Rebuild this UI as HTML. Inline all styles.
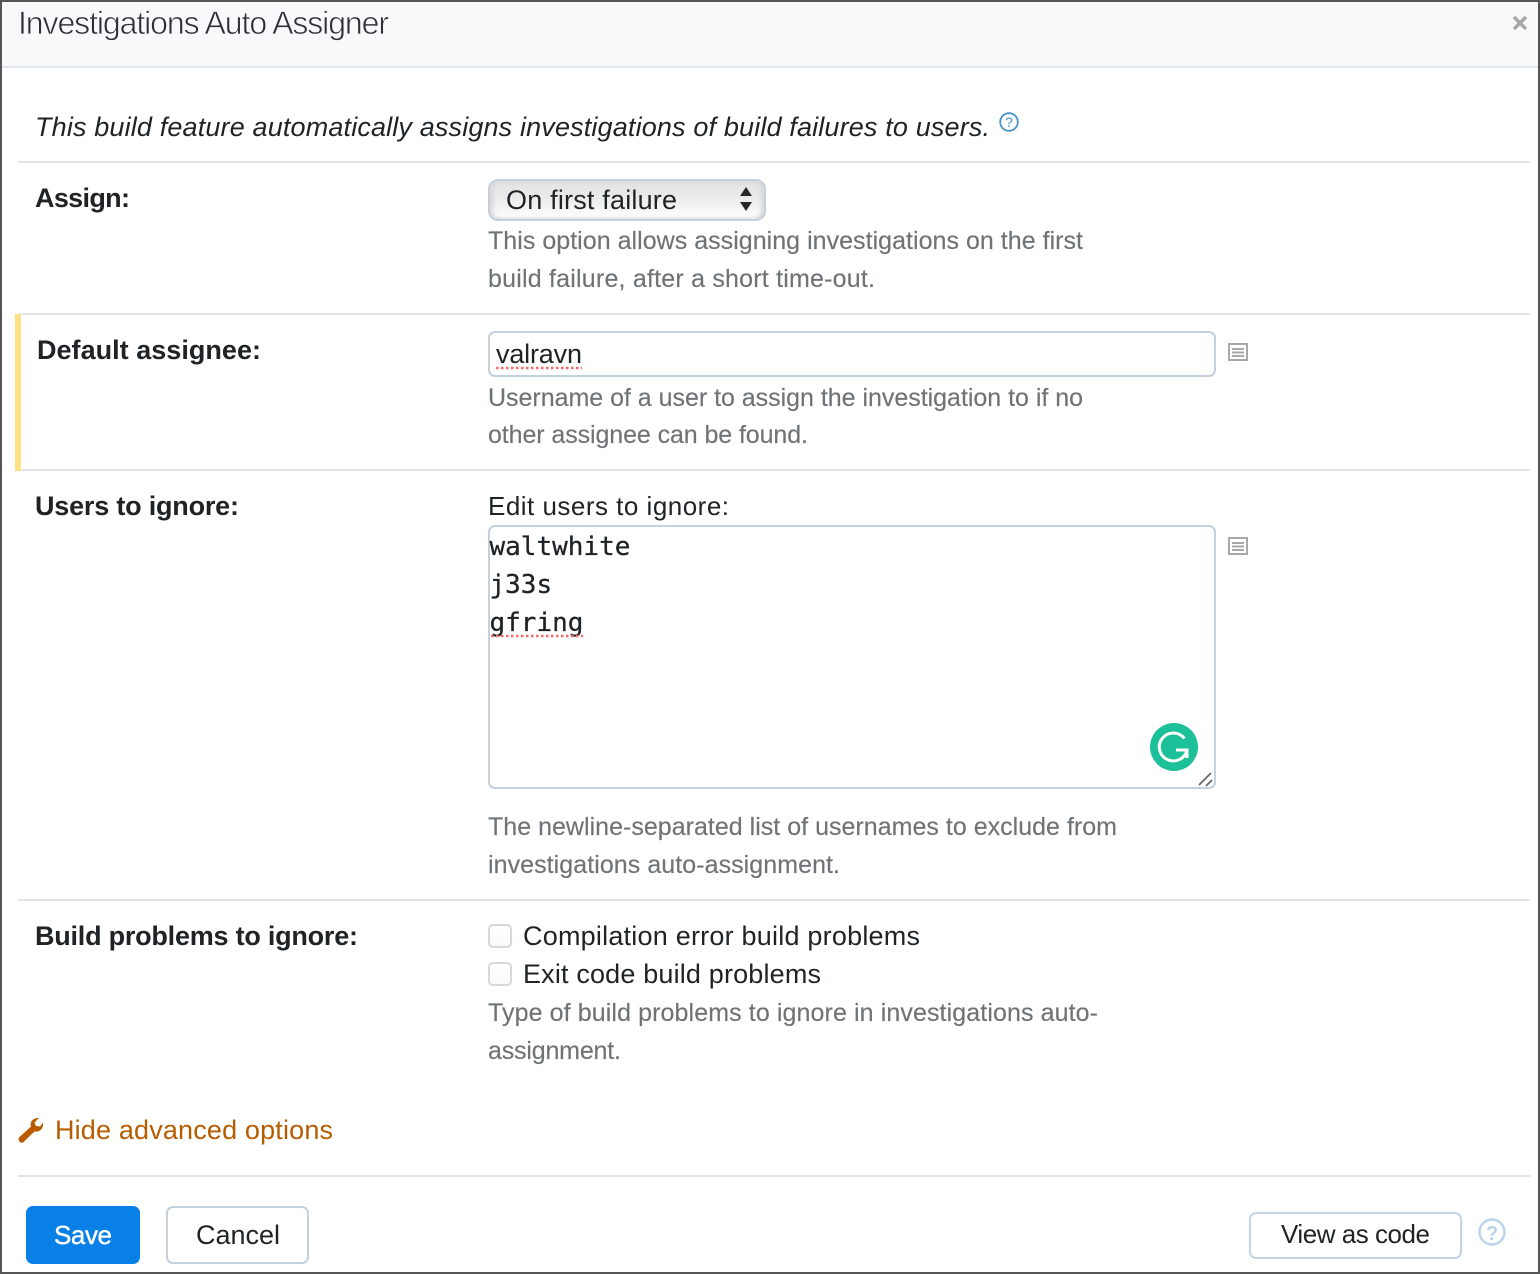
<!DOCTYPE html>
<html><head><meta charset="utf-8">
<style>
html,body{margin:0;padding:0;background:#fff}
#p{position:relative;width:1540px;height:1274px;overflow:hidden;background:#fff;font-family:"Liberation Sans",sans-serif}
#p div{position:absolute;box-sizing:border-box}
.sep{left:18px;width:1512px;height:2px;background:#e1e6ec}
.box{border:2px solid #c3d0dd;border-radius:7px;background:#fff}
.cb{left:488px;width:24px;height:24px;border:2px solid #d8d8d8;border-radius:5px;background:linear-gradient(#fff,#fafafa)}
svg{position:absolute;left:0;top:0}
text{font-family:"Liberation Sans",sans-serif;font-size:26px;fill:#1f2326}
.h{fill:#6f7376;font-size:25px;stroke:#6f7376;stroke-width:.15px}
.b{font-weight:bold;font-size:27px}
.m{font-family:"DejaVu Sans Mono",monospace;font-size:26px;stroke:#1f2326;stroke-width:.3px}
</style></head><body>
<div id="p">
<div style="left:0;top:0;width:1540px;height:68px;background:#f7f9fb;border-bottom:2px solid #dfe6ed"></div>
<div class="sep" style="top:161px"></div>
<div class="sep" style="top:313px"></div>
<div class="sep" style="top:469px"></div>
<div class="sep" style="top:899px"></div>
<div class="sep" style="top:1175px"></div>
<div style="left:15px;top:314px;width:6px;height:157px;background:#ffe082"></div>
<div class="box" style="left:488px;top:179px;width:278px;height:42px;border-radius:10px;background:linear-gradient(#e2e2e2,#ebebeb 45%,#fff);box-shadow:inset 3px 0 4px #d8d8d8,inset -3px 0 4px #d8d8d8"></div>
<div class="box" style="left:488px;top:331px;width:728px;height:46px"></div>
<div class="box" style="left:488px;top:525px;width:728px;height:264px"></div>
<div class="cb" style="top:924px"></div>
<div class="cb" style="top:962px"></div>
<div style="left:26px;top:1206px;width:114px;height:58px;background:#0880e8;border-radius:7px"></div>
<div class="box" style="left:166px;top:1206px;width:143px;height:58px"></div>
<div class="box" style="left:1249px;top:1212px;width:213px;height:47px;border-color:#c3d5e5"></div>
<svg width="1540" height="1274" viewBox="0 0 1540 1274">
<text x="18" y="34" style="font-size:32px;fill:#2c3135;stroke:#f7f9fb;stroke-width:.7px;paint-order:fill" textLength="371" lengthAdjust="spacing">Investigations Auto Assigner</text>
<text x="35" y="136" style="font-style:italic;font-size:27px" textLength="955">This build feature automatically assigns investigations of build failures to users.</text>
<text class="b" x="35" y="207" textLength="95">Assign:</text>
<text x="506" y="209" style="font-size:27px" textLength="171">On first failure</text>
<text class="h" x="488" y="249" textLength="595">This option allows assigning investigations on the first</text>
<text class="h" x="488" y="287" textLength="387">build failure, after a short time-out.</text>
<text class="b" x="37" y="359" textLength="224">Default assignee:</text>
<text x="496" y="363" style="font-size:27px" textLength="86">valravn</text>
<text class="h" x="488" y="406" textLength="595">Username of a user to assign the investigation to if no</text>
<text class="h" x="488" y="443" textLength="320">other assignee can be found.</text>
<text class="b" x="35" y="515" textLength="204">Users to ignore:</text>
<text x="488" y="515" style="font-size:26px" textLength="241">Edit users to ignore:</text>
<text class="m" x="489.500" y="555">waltwhite</text>
<text class="m" x="489.500" y="593">j33s</text>
<text class="m" x="489.500" y="631">gfring</text>
<text class="h" x="488" y="835" textLength="629">The newline-separated list of usernames to exclude from</text>
<text class="h" x="488" y="873" textLength="352">investigations auto-assignment.</text>
<text class="b" x="35" y="945" textLength="323">Build problems to ignore:</text>
<text x="523" y="945" style="font-size:27px" textLength="397">Compilation error build problems</text>
<text x="523" y="983" style="font-size:27px" textLength="298">Exit code build problems</text>
<text class="h" x="488" y="1021" textLength="610">Type of build problems to ignore in investigations auto-</text>
<text class="h" x="488" y="1059" textLength="133">assignment.</text>
<text x="55" y="1139" style="font-size:27px;fill:#b85c00" textLength="278">Hide advanced options</text>
<text x="54" y="1244" style="font-size:26px;fill:#fff;stroke:#fff;stroke-width:.4px" textLength="58">Save</text>
<text x="196" y="1244" style="font-size:27px" textLength="84">Cancel</text>
<text x="1281" y="1243" style="font-size:26px" textLength="149">View as code</text>
<line x1="496" y1="368" x2="582" y2="368" stroke="#f76a6a" stroke-width="2.500" stroke-dasharray="2.500 2.500"/>
<line x1="491" y1="636" x2="583" y2="636" stroke="#f76a6a" stroke-width="2.500" stroke-dasharray="2.500 2.500"/>
<path d="M1514 17L1526 29M1526 17L1514 29" stroke="#a6a8aa" stroke-width="3.400" fill="none"/>
<circle cx="1009" cy="122" r="8.800" fill="none" stroke="#4a94c8" stroke-width="1.800"/>
<text x="1009" y="127" text-anchor="middle" style="font-size:14px;fill:#4a94c8">?</text>
<g fill="none" stroke="#a8a8a8" stroke-width="2">
<rect x="1229" y="344" width="18" height="16"/>
<path d="M1232 349H1244M1232 352.500H1244M1232 356H1244"/>
<rect x="1229" y="538" width="18" height="16"/>
<path d="M1232 543H1244M1232 546.500H1244M1232 550H1244"/>
</g>
<circle cx="1174" cy="747" r="24" fill="#1dc199"/>
<path d="M1184.500 738.500A14 14 0 1 0 1187 750H1176" fill="none" stroke="#fff" stroke-width="3"/>
<path d="M1187 750V758" stroke="#fff" stroke-width="3" fill="none"/>
<path d="M1199 785L1211 773M1206 786L1212 780" stroke="#666" stroke-width="1.800" fill="none"/>
<path d="M19 1137.500L31 1126.500C29.500 1122 33 1117.500 39 1118L34.500 1122.500L36 1126L40 1126.500L43 1122.500C44 1128.500 39.500 1132.500 34.500 1131.500L23 1142.500C20.500 1144 17.500 1140 19 1137.500Z" fill="#b85c00"/>
<circle cx="1492" cy="1232" r="12.500" fill="none" stroke="#b9d4ea" stroke-width="2.400"/>
<text x="1492" y="1240" text-anchor="middle" style="font-size:20px;font-weight:bold;fill:#b9d4ea">?</text>
<path d="M746 187L752 196H740ZM746 211L752 202H740Z" fill="#24282b"/>
</svg>
<div style="left:0;top:0;width:1540px;height:1274px;border:2px solid #555"></div>
</div>
</body></html>
